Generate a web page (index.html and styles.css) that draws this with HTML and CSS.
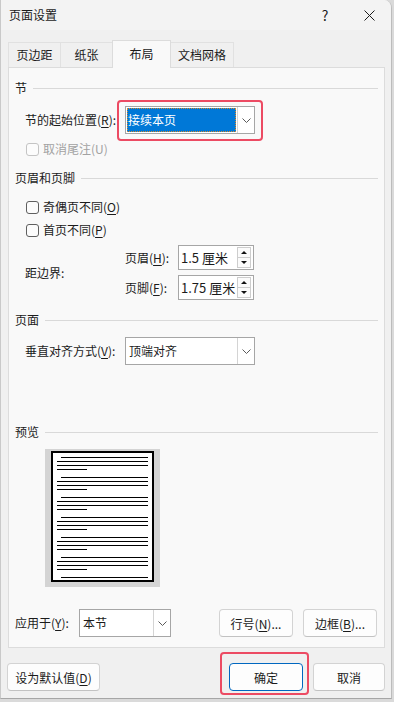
FILE: index.html
```html
<!DOCTYPE html>
<html lang="zh-CN">
<head>
  <meta charset="UTF-8">
  <meta name="viewport" content="width=device-width, initial-scale=1.0">
  <title>页面设置</title>
  <link rel="stylesheet" href="styles.css">
</head>
<body>

  <div class="window">
    <!-- Title bar -->
    <div class="titlebar">
      <span class="title">页面设置</span>
      <span class="help">?</span>
      <span class="close">
        <svg width="11" height="11" viewBox="0 0 11 11"><path d="M0.5 0.5 L10.5 10.5 M10.5 0.5 L0.5 10.5" /></svg>
      </span>
    </div>

    <!-- Tabs -->
    <div class="tabs">
      <div class="tab">页边距</div>
      <div class="tab">纸张</div>
      <div class="tab active">布局</div>
      <div class="tab">文档网格</div>
    </div>

    <div class="panel">
      <!-- 节 -->
      <div class="group-title">节</div>
      <div class="row indent">
        <span class="label">节的起始位置(<u>R</u>):</span>
        <div class="marked">
          <div class="select focused">
            <span class="select-value"><span class="selected-text">接续本页</span></span>
            <span class="select-btn"><svg width="9" height="5" viewBox="0 0 9 5"><path d="M0.5 0.5 L4.5 4.5 L8.5 0.5" /></svg></span>
          </div>
          <span class="mark-box mark-select"></span>
        </div>
      </div>
      <div class="check disabled first-check">
        <span class="box"></span><span>取消尾注(U)</span>
      </div>

      <!-- 页眉和页脚 -->
      <div class="group-title spaced">页眉和页脚</div>
      <div class="check header-check">
        <span class="box"></span><span>奇偶页不同(<u>O</u>)</span>
      </div>
      <div class="check">
        <span class="box"></span><span>首页不同(<u>P</u>)</span>
      </div>
      <div class="margins indent">
        <span class="label edge">距边界:</span>
        <span class="sub-label">页眉(<u>H</u>):</span>
        <div class="spin">
          <span class="spin-value">1.5 厘米</span>
          <span class="spin-btns"><span class="spin-btn up"></span><span class="spin-btn down"></span></span>
        </div>
        <span class="sub-label">页脚(<u>F</u>):</span>
        <div class="spin">
          <span class="spin-value">1.75 厘米</span>
          <span class="spin-btns"><span class="spin-btn up"></span><span class="spin-btn down"></span></span>
        </div>
      </div>

      <!-- 页面 -->
      <div class="group-title page-title">页面</div>
      <div class="row indent align-row">
        <span class="label">垂直对齐方式(<u>V</u>):</span>
        <div class="select">
          <span class="select-value">顶端对齐</span>
          <span class="select-btn"><svg width="9" height="5" viewBox="0 0 9 5"><path d="M0.5 0.5 L4.5 4.5 L8.5 0.5" /></svg></span>
        </div>
      </div>

      <!-- 预览 -->
      <div class="group-title preview-title">预览</div>
      <div class="preview">
        <svg width="115" height="138" viewBox="0 0 115 138">
          <rect x="0" y="0" width="115" height="138" fill="#d4d4d4" />
          <rect x="7" y="3" width="101" height="129" fill="#fff" stroke="#000" stroke-width="2" />
          <g stroke="#000" stroke-width="1">
            <path d="M16 8.5 H103 M12 12.5 H103 M12 16.5 H103 M12 20.5 H42" />
            <path d="M16 28.5 H103 M12 32.5 H103 M12 36.5 H103 M12 40.5 H42" />
            <path d="M16 48.5 H103 M12 52.5 H103 M12 56.5 H103 M12 60.5 H42" />
            <path d="M16 68.5 H103 M12 72.5 H103 M12 76.5 H103 M12 80.5 H42" />
            <path d="M16 88.5 H103 M12 92.5 H103 M12 96.5 H103 M12 100.5 H42" />
            <path d="M16 108.5 H103 M12 112.5 H103 M12 116.5 H103 M12 120.5 H42" />
            <path d="M16 128.5 H103" />
          </g>
        </svg>
      </div>

      <div class="row apply-row">
        <span class="label apply-label">应用于(<u>Y</u>):</span>
        <div class="select small">
          <span class="select-value">本节</span>
          <span class="select-btn"><svg width="9" height="5" viewBox="0 0 9 5"><path d="M0.5 0.5 L4.5 4.5 L8.5 0.5" /></svg></span>
        </div>
        <div class="apply-buttons">
          <button class="btn">行号(<u>N</u>)...</button>
          <button class="btn">边框(<u>B</u>)...</button>
        </div>
      </div>
    </div>

    <!-- Dialog buttons -->
    <div class="footer">
      <button class="btn wide">设为默认值(<u>D</u>)</button>
      <div class="footer-right">
        <div class="marked">
          <button class="btn primary">确定</button>
          <span class="mark-box mark-ok"></span>
        </div>
        <button class="btn cancel">取消</button>
      </div>
    </div>
  </div>

</body>
</html>
```

FILE: styles.css
```css
* {
  box-sizing: border-box;
}

body {
  margin: 0;
  background-color: #dadada;
  font-family: "Noto Sans CJK SC", "Noto Sans", sans-serif;
  font-size: 12px;
  line-height: 16px;
  color: #1b1b1b;
}

u {
  text-decoration-thickness: 1px;
  text-underline-offset: 2px;
}

.window {
  width: 392px;
  height: 699px;
  background-color: #f0f0f0;
  border-left: 1px solid #c9c9c9;
  border-right: 1px solid #bcbcbc;
  border-bottom: 1px solid #a6a6a6;
  border-top-right-radius: 8px;
  overflow: hidden;
}

/* title bar */
.titlebar {
  height: 30px;
  display: flex;
  align-items: center;
  padding-left: 8px;
  background-color: #f3f3f3;
}

.title {
  flex: 1;
}

.help {
  width: 44px;
  text-align: center;
  font-size: 14px;
}

.close {
  width: 44px;
  display: flex;
  justify-content: center;
}

.close svg path {
  stroke: #1b1b1b;
  stroke-width: 1;
  fill: none;
}

/* tabs */
.tabs {
  display: flex;
  align-items: flex-end;
  height: 28px;
  margin-top: 10px;
  margin-bottom: -1px;
  padding-left: 7px;
}

.tab {
  height: 25px;
  min-width: 53px;
  padding: 0 7px;
  margin-bottom: 1px;
  margin-right: -1px;
  display: flex;
  align-items: center;
  justify-content: center;
  border: 1px solid #e1e1e1;
  border-bottom: none;
  background-color: #f0f0f0;
}

.tab.active {
  position: relative;
  z-index: 1;
  height: 28px;
  min-width: 59px;
  margin-bottom: 0;
  padding-bottom: 2px;
  background-color: #f9f9f9;
  border-color: #dcdcdc;
}

/* panel */
.panel {
  margin: 0 6px 0 7px;
  padding: 0 6px 10px;
  background-color: #f9f9f9;
  border: 1px solid #dcdcdc;
}

.group-title {
  display: flex;
  align-items: center;
  gap: 6px;
  height: 16px;
  margin-top: 12px;
}

.group-title::after {
  content: "";
  flex: 1;
  height: 1px;
  background-color: #d9d9d9;
}

.group-title.spaced {
  margin-top: 14px;
}

.group-title.page-title {
  margin-top: 12px;
}

.group-title.preview-title {
  margin-top: 59px;
}

.row {
  display: flex;
  align-items: center;
  margin-top: 10px;
}

.indent {
  padding-left: 10px;
}

.label {
  width: 100px;
  white-space: nowrap;
}

/* dropdowns */
.select {
  width: 130px;
  height: 28px;
  display: flex;
  border: 1px solid #a6a6a6;
  background-color: #fff;
}

.select.small {
  width: 92px;
}

.select-value {
  flex: 1;
  display: flex;
  align-items: center;
  padding-left: 3px;
}

.select-btn {
  width: 17px;
  display: flex;
  align-items: center;
  justify-content: center;
  border-left: 1px solid #d4d4d4;
}

.select-btn path {
  fill: none;
  stroke: #5a5a5a;
  stroke-width: 1;
}

.select.focused .select-value {
  padding: 1px;
}

.selected-text {
  flex: 1;
  height: 100%;
  display: flex;
  align-items: center;
  padding-left: 1px;
  background-color: #0078d7;
  color: #fff;
  outline: 1px dotted #d98a2b;
  outline-offset: -1px;
}

/* red annotation boxes */
.marked {
  position: relative;
}

.mark-box {
  position: absolute;
  border: 2px solid #ec4b63;
  border-radius: 4px;
  pointer-events: none;
}

.mark-select {
  top: -6px;
  left: -8px;
  right: -8px;
  bottom: -7px;
}

.mark-ok {
  top: -11px;
  left: -9px;
  right: -6px;
  bottom: -4px;
}

/* checkboxes */
.check {
  display: flex;
  align-items: center;
  gap: 4px;
  height: 14px;
  margin-top: 9px;
  padding-left: 11px;
}

.check .box {
  width: 13px;
  height: 13px;
  border: 1px solid #5f5f5f;
  border-radius: 3px;
  background-color: #fcfcfc;
}

.check.disabled {
  color: #a2a2a2;
}

.check.disabled .box {
  border-color: #c4c4c4;
}

.first-check {
  margin-top: 8px;
}

.header-check {
  margin-top: 14px;
}

/* distance from edge */
.margins {
  display: grid;
  grid-template-columns: 100px 53px 76px;
  grid-template-rows: 25px 25px;
  row-gap: 5px;
  align-items: center;
  margin-top: 8px;
}

.edge {
  grid-row: 1 / 3;
}

.spin {
  height: 25px;
  display: flex;
  border: 1px solid #a6a6a6;
  background-color: #fff;
}

.spin-value {
  flex: 1;
  display: flex;
  align-items: center;
  padding-left: 2px;
  font-size: 13px;
}

.spin-btns {
  width: 17px;
  display: flex;
  flex-direction: column;
  padding: 1px 2px 1px 1px;
}

.spin-btn {
  flex: 1;
  display: flex;
  align-items: center;
  justify-content: center;
  border: 1px solid #cdcdcd;
  background-color: #fbfbfb;
}

.spin-btn.down {
  border-top: none;
}

.spin-btn::before {
  content: "";
  border-left: 3px solid transparent;
  border-right: 3px solid transparent;
}

.spin-btn.up::before {
  border-bottom: 3px solid #111;
}

.spin-btn.down::before {
  border-top: 3px solid #111;
}

.align-row {
  margin-top: 9px;
}

/* preview */
.preview {
  margin-top: 9px;
  margin-left: 30px;
  height: 138px;
}

.preview svg {
  display: block;
}

.apply-row {
  margin-top: 22px;
}

.apply-label {
  width: 64px;
}

.apply-buttons {
  margin-left: auto;
  margin-right: 1px;
  display: flex;
  gap: 10px;
}

/* buttons */
.btn {
  height: 28px;
  width: 74px;
  padding: 0;
  font-family: inherit;
  font-size: 12px;
  color: #1b1b1b;
  background-color: #fdfdfd;
  border: 1px solid #d3d3d3;
  border-bottom-color: #c2c2c2;
  border-radius: 4px;
}

.btn.wide {
  width: 93px;
}

.btn.primary {
  display: block;
  border-color: #0067c0;
}

.btn.cancel {
  width: 72px;
}

.footer {
  display: flex;
  justify-content: space-between;
  margin-top: 15px;
  padding: 0 6px 0 6px;
}

.footer-right {
  display: flex;
  gap: 10px;
}
```
